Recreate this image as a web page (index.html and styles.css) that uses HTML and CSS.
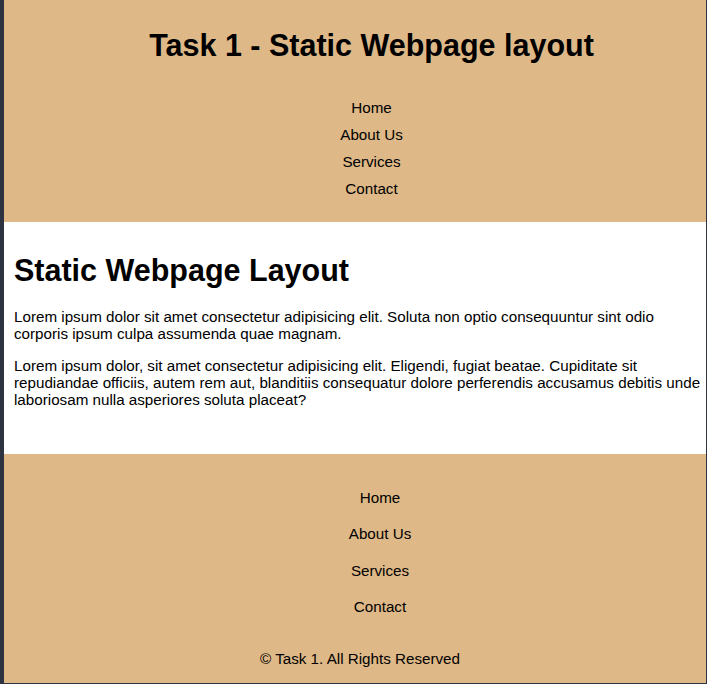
FILE: index.html
```html
<!DOCTYPE html>
<html lang="en">
<head>
<meta charset="utf-8">
<title>Task 1 - Static Webpage layout</title>
<link rel="stylesheet" href="styles.css">
</head>
<body>
<div class="page">
  <header class="site-header">
    <h1 class="site-title">Task 1 - Static Webpage layout</h1>
    <nav>
      <ul class="nav-list">
        <li><a href="#">Home</a></li>
        <li><a href="#">About Us</a></li>
        <li><a href="#">Services</a></li>
        <li><a href="#">Contact</a></li>
      </ul>
    </nav>
  </header>
  <main class="content">
    <h2 class="content-title">Static Webpage Layout</h2>
    <p>Lorem ipsum dolor sit amet consectetur adipisicing elit. Soluta non optio consequuntur sint odio corporis ipsum culpa assumenda quae magnam.</p>
    <p>Lorem ipsum dolor, sit amet consectetur adipisicing elit. Eligendi, fugiat beatae. Cupiditate sit repudiandae officiis, autem rem aut, blanditiis consequatur dolore perferendis accusamus debitis unde laboriosam nulla asperiores soluta placeat?</p>
  </main>
  <footer class="site-footer">
    <ul class="footer-list">
      <li><a href="#">Home</a></li>
      <li><a href="#">About Us</a></li>
      <li><a href="#">Services</a></li>
      <li><a href="#">Contact</a></li>
    </ul>
    <p class="copyright">&copy; Task 1. All Rights Reserved</p>
  </footer>
</div>
</body>
</html>
```

FILE: styles.css
```css
html, body {
  margin: 0;
  padding: 0;
  height: 100%;
}

body {
  background: #2d3340;
  font-family: "Liberation Sans", Arial, sans-serif;
  color: #000;
}

.page {
  margin: 0 1px 0 4px;
  height: 683px;
  display: flex;
  flex-direction: column;
  background: #deb887;
}

a {
  color: #000;
  text-decoration: none;
}

ul {
  list-style: none;
  margin: 0;
  padding: 0;
}

.site-header {
  background: #deb887;
  padding: 0 0 20px 33px;
  text-align: center;
}

.site-title {
  margin: 27px 0 0;
  font-size: 30.5px;
  line-height: 37px;
  font-weight: bold;
}

.nav-list {
  margin-top: 30px;
}

.nav-list li {
  font-size: 15.2px;
  line-height: 27px;
}

.content {
  background: #fff;
  padding: 22px 0 31px 10px;
}

.content-title {
  margin: 8px 0 19px;
  font-size: 30.5px;
  line-height: 37px;
}

.content p {
  margin: 0 0 15px;
  font-size: 15.2px;
  line-height: 17px;
}

.site-footer {
  flex: 1;
  background: #deb887;
  text-align: center;
  padding-top: 26px;
}

.footer-list {
  padding-left: 50px;
}

.footer-list li {
  font-size: 15.2px;
  line-height: 36.3px;
}

.copyright {
  margin: 25px 0 0;
  padding-left: 10px;
  font-size: 15.2px;
  line-height: 18px;
}
```
